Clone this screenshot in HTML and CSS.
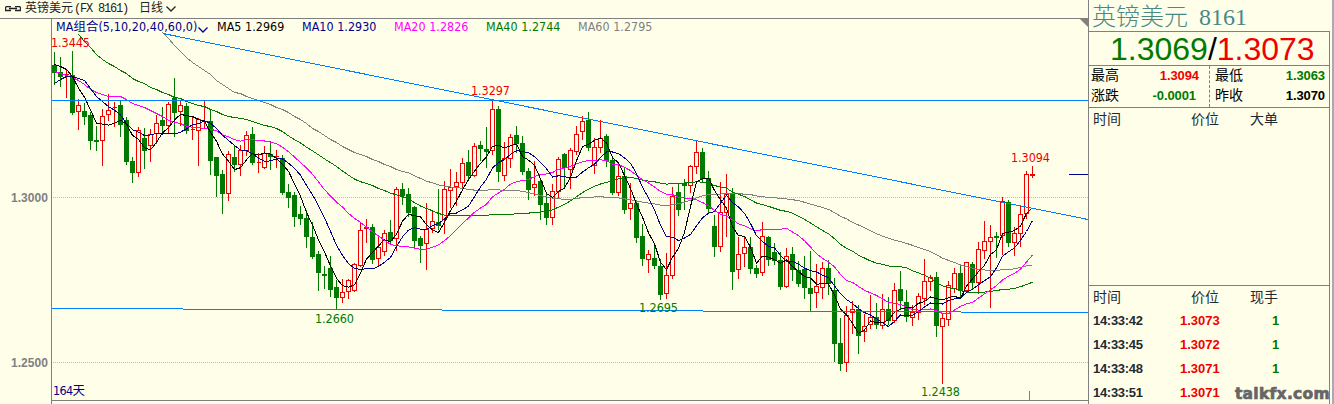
FILE: index.html
```html
<!DOCTYPE html>
<html lang="zh-CN">
<head>
  <meta charset="UTF-8">
  <title>英镑美元 8161</title>
  <link rel="stylesheet" href="styles.css">
</head>
<body>
  <div class="terminal">
    <div class="main">
      <div class="titlebar">
        <svg class="link-icon" width="16" height="6" viewBox="0 0 16 6">
          <path d="M6 .5H1.5l-1 1v3h5.5M10 .5h4.5l1 1v3H10M4 2.5h8" />
        </svg>
        <span class="symbol">英镑美元<span class="code">(FX 8161)</span></span>
        <span class="period">日线</span>
        <svg class="chevron" width="10" height="6" viewBox="0 0 10 6"><path d="M.5.5 5 5 9.5.5" /></svg>
      </div>
      <div class="chart">
        <svg id="plot" width="1088" height="385" viewBox="0 19 1088 385"></svg>
        <div class="legend">
          <span class="navy combo">MA组合(5,10,20,40,60,0)</span>
          <svg class="chevron" width="10" height="6" viewBox="0 0 10 6"><path d="M.5.5 5 5 9.5.5" /></svg>
          <span class="ma5">MA5 1.2969</span>
          <span class="ma10">MA10 1.2930</span>
          <span class="ma20">MA20 1.2826</span>
          <span class="ma40">MA40 1.2744</span>
          <span class="ma60">MA60 1.2795</span>
        </div>
      </div>
    </div>

    <div class="quote">
      <div class="name">英镑美元 <span>8161</span></div>
      <div class="price"><span class="green">1.3069</span>/<span class="red">1.3073</span></div>
      <div class="stats">
        <div class="col">
          <div><span>最高</span><b class="red">1.3094</b></div>
          <div><span>涨跌</span><b class="green">-0.0001</b></div>
        </div>
        <div class="col">
          <div><span>最低</span><b class="green">1.3063</b></div>
          <div><span>昨收</span><b>1.3070</b></div>
        </div>
      </div>
      <div class="big-orders">
        <div class="row head"><span>时间</span><span>价位</span><span>大单</span></div>
      </div>
      <div class="ticks">
        <div class="row head"><span>时间</span><span>价位</span><span>现手</span></div>
        <div class="row"><span>14:33:42</span><span class="red">1.3073</span><span class="green">1</span></div>
        <div class="row"><span>14:33:45</span><span class="red">1.3072</span><span class="green">1</span></div>
        <div class="row"><span>14:33:48</span><span class="red">1.3071</span><span class="green">1</span></div>
        <div class="row"><span>14:33:51</span><span class="red">1.3071</span><span></span></div>
      </div>
      <div class="watermark">talkfx.com</div>
    </div>
  </div>
  <script src="chart.js"></script>
</body>
</html>
```

FILE: styles.css
```css
body {
  margin: 0;
  background: #ffffe9;
  font-family: "Liberation Sans", "Noto Sans CJK SC", sans-serif;
  color: #000;
  overflow: hidden;
}
.terminal {
  display: flex;
  width: 1334px;
  height: 404px;
}
.main {
  width: 1088px;
}
.red { color: #f00000; }
.green { color: #007a00; }
.navy { color: #00008b; }

/* title bar */
.titlebar {
  display: flex;
  align-items: center;
  box-sizing: border-box;
  height: 19px;
  padding-left: 5px;
  border-bottom: 1px solid #808080;
  font: 12px/18px "Liberation Mono", "Noto Sans CJK SC", monospace;
  color: #222;
}
.symbol {
  margin-left: 4px;
  width: 114px;
  white-space: nowrap;
}
.code {
  margin-left: 1px;
  letter-spacing: -1.2px;
}
.link-icon, .chevron {
  fill: none;
  stroke: #222;
  stroke-width: 1.3;
}
.titlebar .chevron {
  margin-left: 3px;
}

/* chart */
.chart {
  position: relative;
  height: 385px;
}
#plot {
  display: block;
}
.legend {
  position: absolute;
  top: 0;
  left: 56px;
  display: flex;
  align-items: center;
  height: 16px;
  font: 12.4px/16px "DejaVu Sans Condensed", "DejaVu Sans", "Noto Sans CJK SC", sans-serif;
  font-stretch: condensed;
  white-space: nowrap;
}
.legend span {
  width: 92px;
  letter-spacing: 0.05px;
}
.legend .combo {
  width: 142px;
  letter-spacing: 0.1px;
}
.legend .chevron {
  margin: 6px 9px 0 0;
  stroke: #00008b;
}
.legend .ma5 { width: 85px; }
.ma10 { color: #00008b; }
.ma20 { color: #ff00ff; }
.ma40 { color: #007a00; }
.ma60 { color: #808080; }

#plot .frame { fill: none; stroke: #808080; shape-rendering: crispEdges; }
#plot .corner { fill: #808080; }
#plot .grid { stroke: #c0c0c0; stroke-dasharray: 1 1; shape-rendering: crispEdges; }
#plot .trend { stroke: #0080ff; shape-rendering: crispEdges; }
#plot .last { stroke: #00008b; shape-rendering: crispEdges; }
#plot .up { fill: none; stroke: #f00000; shape-rendering: crispEdges; }
#plot .down { fill: #007a00; stroke: #007a00; shape-rendering: crispEdges; }
#plot .avg { fill: none; shape-rendering: crispEdges; }
#plot .avg5 { stroke: #000; }
#plot .avg10 { stroke: #00008b; }
#plot .avg20 { stroke: #ff00ff; }
#plot .avg40 { stroke: #007a00; }
#plot .avg60 { stroke: #808080; }
#plot text {
  font: 12.5px "DejaVu Sans Condensed", "DejaVu Sans", "Noto Sans CJK SC", sans-serif;
  font-stretch: condensed;
}
#plot .hi { fill: #f00000; }
#plot .lo { fill: #007a00; }
#plot .days { fill: #00008b; }
#plot .axis {
  font: bold 12px "Liberation Sans", sans-serif;
  fill: #808080;
}

/* quote panel */
.quote {
  position: relative;
  display: flex;
  flex-direction: column;
  box-sizing: border-box;
  width: 242px;
  border-left: 1px solid #808080;
}
.terminal::after {
  content: "";
  width: 2px;
  margin-left: auto;
  background: #aaa9b4;
}
.name {
  height: 31px;
  padding-left: 3px;
  font: 24px/35px "Liberation Serif", "Noto Sans CJK SC", serif;
  font-weight: 300;
  color: #4a8787;
  white-space: nowrap;
}
.name span {
  margin-left: 5px;
}
.price, .stats, .big-orders, .ticks {
  box-sizing: border-box;
  border-top: 1px solid #808080;
  border-right: 1px solid #808080;
}
.price {
  height: 34px;
  padding-left: 21px;
  font-size: 32px;
  line-height: 35px;
}
.stats {
  display: flex;
  height: 42px;
}
.col {
  box-sizing: border-box;
  width: 120px;
  padding: 0 10px 0 2px;
  font-size: 14px;
  line-height: 18px;
}
.col + .col {
  border-left: 1px dashed #808080;
  padding: 0 4px 0 5px;
}
.col div {
  display: flex;
  justify-content: space-between;
  height: 20px;
}
.col b {
  font-size: 13px;
  line-height: 19px;
  letter-spacing: -0.1px;
}
.col:first-child b.green {
  margin-right: 3px;
}
.big-orders {
  height: 179px;
}
.ticks {
  flex: 1;
}
.row {
  display: grid;
  grid-template-columns: 87px 72px 30px;
  height: 24px;
  padding-left: 4px;
  font: bold 13px/25px "Liberation Sans", sans-serif;
  color: #1f2a33;
}
.row span:first-child {
  letter-spacing: -0.3px;
}
.row span:last-child {
  padding-left: 20px;
}
.row .red { color: #f00000; }
.row .green { color: #007a00; }
.head {
  height: 22px;
  grid-template-columns: 98px 59px 40px;
  font: 14px/21px "Noto Sans CJK SC", sans-serif;
}
.head span:first-child {
  letter-spacing: 0;
}
.head span:last-child {
  padding-left: 0;
}
.watermark {
  position: absolute;
  right: 0;
  bottom: 1px;
  font: bold 15.5px/18px "DejaVu Sans", sans-serif;
  letter-spacing: 0.3px;
  color: #666;
  -webkit-text-stroke: 0.7px #666;
}
```

FILE: chart.js
```js
const STEP = 6;
const X0 = 54;

// one row per day: high, body top, body bottom, low, up (1) / down (0)
const days = [
  [52,65,72,84,0],[57,72,76,86,0],[69,74,74,97,1],[51,75,112,114,0],[99,105,111,129,1],
  [103,111,116,124,0],[112,115,140,149,0],[126,140,141,150,0],[109,116,140,165,1],[94,110,114,120,1],
  [102,107,107,126,1],[100,105,124,136,0],[117,120,161,164,0],[157,161,172,182,0],[127,130,172,176,1],
  [128,138,150,168,0],[129,134,145,161,1],[115,123,133,143,1],[107,120,125,132,0],[102,104,125,132,1],
  [78,98,112,136,0],[100,105,111,125,1],[103,106,130,133,0],[117,129,129,139,1],[118,119,130,165,1],
  [100,121,121,127,1],[109,121,160,174,0],[157,157,175,196,0],[170,174,193,213,0],[151,154,193,200,1],
  [146,157,164,171,0],[145,150,164,175,1],[131,135,150,155,1],[127,134,162,164,0],[153,162,162,172,1],
  [146,153,167,168,1],[141,154,156,169,0],[150,156,156,167,1],[155,158,192,194,0],[184,192,197,207,0],
  [192,195,216,226,0],[206,214,218,224,0],[210,218,236,247,0],[222,237,256,258,0],[251,254,272,290,0],
  [266,274,275,288,0],[256,268,289,296,0],[280,287,297,309,0],[279,292,297,302,1],[279,280,291,298,1],
  [263,264,290,291,1],[223,230,265,266,1],[219,227,228,242,1],[224,227,259,263,0],[237,247,258,265,1],
  [230,233,251,255,1],[220,232,240,244,0],[187,189,238,250,1],[183,189,195,204,0],[188,194,212,216,0],
  [206,207,240,247,0],[236,238,245,262,0],[203,229,243,269,1],[210,221,228,232,1],[189,222,225,229,0],
  [181,189,219,233,1],[169,187,190,207,1],[172,182,186,205,1],[158,163,182,188,1],[150,162,175,179,0],
  [143,146,175,176,1],[141,145,148,160,0],[127,149,151,167,0],[100,109,150,154,1],[106,109,171,181,0],
  [142,158,175,180,1],[134,137,158,167,1],[126,135,143,152,0],[136,143,171,174,0],[168,171,189,199,0],
  [161,184,187,195,1],[178,181,204,219,0],[192,203,217,224,0],[184,191,217,224,1],[157,159,191,198,1],
  [153,154,167,188,0],[148,150,169,188,1],[126,134,151,154,1],[116,121,131,139,1],[112,120,147,150,0],
  [138,147,165,173,1],[120,138,147,152,1],[134,136,160,166,0],[156,160,192,194,0],[163,176,192,195,1],
  [167,176,209,213,0],[183,203,208,219,1],[200,203,237,242,0],[224,236,258,265,0],[250,254,259,272,1],
  [246,258,265,268,0],[259,266,294,299,0],[253,275,293,298,1],[187,196,275,278,1],[184,192,209,215,0],
  [179,183,185,209,0],[165,166,185,192,1],[140,152,166,173,1],[148,152,178,181,0],[171,178,208,212,0],
  [215,226,246,256,0],[182,212,246,251,1],[174,194,212,236,1],[188,194,271,289,0],[237,254,269,278,1],
  [236,247,253,266,1],[237,247,268,273,0],[265,268,273,277,0],[222,236,272,275,1],[236,237,259,265,0],
  [243,252,260,264,0],[252,260,286,289,0],[248,256,286,287,1],[247,254,269,280,0],[261,270,283,286,0],
  [256,269,287,298,0],[251,288,293,311,0],[264,286,292,307,1],[262,268,287,298,1],[260,268,283,294,0],
  [278,290,343,361,0],[318,343,363,370,0],[306,315,362,371,1],[301,309,312,333,1],[305,309,335,353,0],
  [314,326,331,341,1],[295,317,324,328,1],[303,317,324,328,0],[294,309,325,328,1],[297,309,320,324,0],
  [283,290,320,322,1],[271,289,300,308,0],[290,302,316,321,0],[305,312,317,325,1],[293,296,312,319,1],
  [259,281,298,304,1],[275,277,281,290,1],[272,277,325,336,0],[314,318,326,383,1],[281,285,319,325,1],
  [268,273,288,292,1],[264,273,290,298,0],[262,262,290,292,1],[262,264,282,289,0],[242,249,282,293,1],
  [221,241,250,258,1],[225,237,241,307,1],[232,236,237,257,0],[197,201,235,254,1],[200,202,242,246,0],
  [227,233,242,255,1],[205,214,233,246,1],[171,174,213,218,1],[166,174,175,177,1]
];

// averages carried over from before the first visible day, [first index, values]
const carried = {
  5: [0, [64,66,69,76]],
  10: [0, [83,79,76,76,78,80,88,96,101]],
  20: [0, [71,73,75,77,80,84,89,92,94,96,96,96,99,103,105,107,110,113,116]],
  40: [4, [34,41,47,54,59,63,66,70,73,78,81,83,87,89,92,94,97,98,101,103,105,106,109,111,114,
    116,117,118,119,121,123,125,126,128,131]],
  60: [18, [32,38,45,51,57,62,66,70,74,80,84,88,92,93,96,98,100,102,104,107,109,112,116,119,
    123,128,131,135,139,142,146,149,152,154,156,159,161,164,166,169,171]]
};

const close = days.map(d => d[4] ? d[1] : d[2]);

function avgPoints(n) {
  const [first, values] = carried[n];
  const pts = values.map((y, i) => [X0 + (first + i) * STEP + 0.5, y + 0.5]);
  let sum = 0;
  close.forEach((c, i) => {
    sum += c;
    if (i >= n) sum -= close[i - n];
    if (i >= n - 1) pts.push([X0 + i * STEP + 0.5, sum / n + 0.5]);
  });
  return pts.map(p => p.join(',')).join(' ');
}

function candle([high, top, bottom, low, up], i) {
  const x = X0 + i * STEP;
  const h = bottom - top;
  const cls = up ? 'up' : 'down';
  return `<path class="${cls}" d="M${x + 0.5} ${high}V${top}M${x + 0.5} ${bottom + 1}V${low + 1}` +
    `M${x - 1.5} ${top + 0.5}h4v${h}h-4z"/>`;
}

const line = (cls, x1, y1, x2, y2) => `<line class="${cls}" x1="${x1}" y1="${y1}" x2="${x2}" y2="${y2}"/>`;
const label = (cls, x, y, w, s) => `<text class="${cls}" x="${x}" y="${y}" textLength="${w}">${s}</text>`;

document.getElementById('plot').innerHTML =
  line('grid', 53, 197.5, 1088, 197.5) +
  line('grid', 53, 362.5, 1088, 362.5) +
  days.map(candle).join('') +
  [60, 40, 20, 10, 5].map(n => `<polyline class="avg avg${n}" points="${avgPoints(n)}"/>`).join('') +
  line('trend', 52, 100.5, 1088, 100.5) +
  line('trend', 163, 33.5, 1088, 219.5) +
  line('trend', 52, 308.5, 1088, 312.5) +
  line('last', 1069, 174.5, 1088, 174.5) +
  '<path class="frame" d="M51.5 19V404M51 400.5H1088M1029.5 391V400"/>' +
  '<path class="corner" d="M1079 18h9v9z"/>' +
  label('axis', 11, 202, 37, '1.3000') +
  label('axis', 11, 367, 37, '1.2500') +
  label('hi', 51, 47, 39, '1.3445') +
  label('hi', 471, 95, 39, '1.3297') +
  label('hi', 1011, 162, 39, '1.3094') +
  label('lo', 315, 323, 39, '1.2660') +
  label('lo', 639, 312, 39, '1.2695') +
  label('lo', 921, 396, 39, '1.2438') +
  label('days', 53, 395, 32, '164天');
```
